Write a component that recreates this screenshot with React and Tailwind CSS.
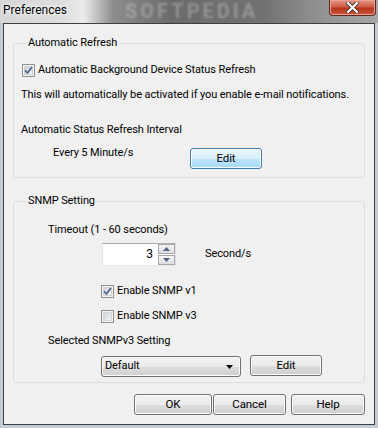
import { useId } from 'react';

const font = "font-['Roboto','Open_Sans',sans-serif]";

const CheckBox = ({ checked }) => {
  const id = useId();
  return (
    <svg width="13" height="13" viewBox="0 0 13 13" className="shrink-0">
      <defs>
        <linearGradient id={id} x1="0" y1="0" x2="1" y2="1">
          <stop offset="0" stopColor="#cbcfd5" />
          <stop offset="1" stopColor="#f6f6f6" />
        </linearGradient>
      </defs>
      <rect x="0.5" y="0.5" width="12" height="12" fill="#f4f4f4" stroke="#8e8f8f" />
      <rect x="2.5" y="2.5" width="8" height="8" fill={`url(#${id})`} stroke="#d2d4d8" />
      {checked && (
        <path d="M3 6.3 L5.4 9 L10 3" fill="none" stroke="#4b5f93" strokeWidth="1.7" />
      )}
    </svg>
  );
};

const Button = ({ children, className = '', blue }) => (
  <button
    className={`h-[21px] rounded-[3px] border text-[11.5px] leading-none text-black shadow-[inset_0_0_0_1px_#fcfcfc] ${
      blue
        ? 'border-[#3c7fb1] bg-[linear-gradient(180deg,#eaf6fd_0%,#d9f0fc_50%,#bee6fd_50%,#a7d9f5_100%)]'
        : 'border-[#707070] bg-[linear-gradient(180deg,#f2f2f2_0%,#ebebeb_50%,#dddddd_50%,#cfcfcf_100%)]'
    } ${className}`}
  >
    {children}
  </button>
);

const Arrow = ({ up }) => (
  <svg width="7" height="4" viewBox="0 0 7 4">
    <path d={up ? 'M0 4 L3.5 0 L7 4 Z' : 'M0 0 L7 0 L3.5 4 Z'} fill="#4d6185" />
  </svg>
);

const SpinBox = () => (
  <div className="flex h-[23px] w-[74px] border border-[#abadb3] border-t-[#abadb3] border-l-[#e2e3ea] border-r-[#dbdfe6] border-b-[#e3e9ef] bg-white">
    <div className="flex-1 pr-[5px] text-right text-[12px] leading-[21px]">3</div>
    <div className="flex w-[17px] flex-col gap-[1px]">
      <div className="flex h-[10px] items-center justify-center border border-[#a8a8a8] bg-[linear-gradient(180deg,#f5f5f5,#dedede)]">
        <Arrow up />
      </div>
      <div className="flex h-[10px] items-center justify-center border border-[#a8a8a8] bg-[linear-gradient(180deg,#f5f5f5,#dedede)]">
        <Arrow />
      </div>
    </div>
  </div>
);

const Group = ({ title, children, className = '' }) => (
  <fieldset className={`w-[352px] rounded-[3px] border border-[#d5dfe5] pl-[7px] ${className}`}>
    <legend className="ml-[5px] px-[2px] leading-[16px]">{title}</legend>
    {children}
  </fieldset>
);

export default function App() {
  return (
    <div className={`relative flex h-[428px] w-[378px] flex-col overflow-hidden bg-[#c4cbd2] text-[11px] tracking-[-0.1px] text-black ${font}`}>
      <div className="relative flex h-[23px] shrink-0 items-start justify-between overflow-hidden bg-[linear-gradient(90deg,#d6d6d6_0%,#dedede_17%,#ececec_22%,#8c8c8c_30%,#6b6b6b_45%,#727272_70%,#8d8d8d_82%,#a7a7a7_100%)]">
        <div className="pointer-events-none absolute left-[125px] top-0 text-[20px] font-bold leading-[22px] tracking-[3px] text-white/25 blur-[1px]">
          SOFTPEDIA
        </div>
        <div className="relative pl-[3px] pt-[2px] text-[12px] leading-[16px] tracking-normal [text-shadow:0_0_6px_#fff,0_0_3px_#fff]">
          Preferences
        </div>
        <div className="relative mr-[2px] flex h-[16px] w-[47px] items-center justify-center rounded-b-[4px] border border-t-0 border-[#5a2a22] bg-[linear-gradient(180deg,#e39a88_0%,#cf5b45_45%,#b8341c_55%,#c9563c_100%)] shadow-[inset_0_0_0_1px_#e9a293]">
          <svg width="13" height="11" viewBox="0 0 13 11">
            <path d="M2 1 L11 10 M11 1 L2 10" stroke="#3b2a28" strokeWidth="3.8" strokeLinecap="square" />
            <path d="M2 1 L11 10 M11 1 L2 10" stroke="#ffffff" strokeWidth="2.2" strokeLinecap="square" />
          </svg>
        </div>
      </div>

      <div className="mx-[3px] mb-[3px] flex flex-1 flex-col border border-[#3f3f3f] bg-[#f0f0f0] pl-[9px] pt-[11px]">
        <Group title="Automatic Refresh" className="pb-[8px]">
          <div className="mt-[11px] flex h-[16px] items-center gap-[3px] pl-[1px]">
            <CheckBox checked />
            <span>Automatic Background Device Status Refresh</span>
          </div>
          <div className="mt-[9px] whitespace-nowrap leading-[16px]">
            This will automatically be activated if you enable e-mail notifications.
          </div>
          <div className="mt-[19px] leading-[16px]">Automatic Status Refresh Interval</div>
          <div className="mt-[7px] flex items-start">
            <span className="w-[169px] pl-[32px] leading-[16px]">Every 5 Minute/s</span>
            <Button blue className="mt-[3px] w-[72px]">Edit</Button>
          </div>
        </Group>

        <Group title="SNMP Setting" className="mt-[15px] pb-[5px]">
          <div className="mt-[13px] pl-[27px] leading-[16px]">Timeout (1 - 60 seconds)</div>
          <div className="mt-[5px] flex items-center pl-[81px]">
            <SpinBox />
            <span className="ml-[29px]">Second/s</span>
          </div>
          <div className="mt-[17px] flex h-[16px] items-center gap-[3px] pl-[80px]">
            <CheckBox checked />
            <span>Enable SNMP v1</span>
          </div>
          <div className="mt-[9px] flex h-[16px] items-center gap-[3px] pl-[80px]">
            <CheckBox />
            <span>Enable SNMP v3</span>
          </div>
          <div className="mt-[9px] pl-[27px] leading-[16px]">Selected SNMPv3 Setting</div>
          <div className="mt-[7px] flex items-start pl-[80px]">
            <div className="flex h-[21px] w-[140px] items-center justify-between rounded-[3px] border border-[#707070] bg-[linear-gradient(180deg,#f2f2f2_0%,#ebebeb_50%,#dddddd_50%,#cfcfcf_100%)] pl-[3px] pr-[7px] shadow-[inset_0_0_0_1px_#fcfcfc]">
              <span>Default</span>
              <svg width="7" height="4" viewBox="0 0 7 4">
                <path d="M0 0 L7 0 L3.5 4 Z" fill="#000" />
              </svg>
            </div>
            <Button className="-mt-[1px] ml-[9px] w-[72px]">Edit</Button>
          </div>
        </Group>

        <div className="mt-[11px] flex w-[352px] justify-end">
          <Button className="w-[78px]">OK</Button>
          <Button className="ml-[1px] w-[73px]">Cancel</Button>
          <Button className="ml-[5px] w-[74px]">Help</Button>
        </div>
      </div>
    </div>
  );
}
